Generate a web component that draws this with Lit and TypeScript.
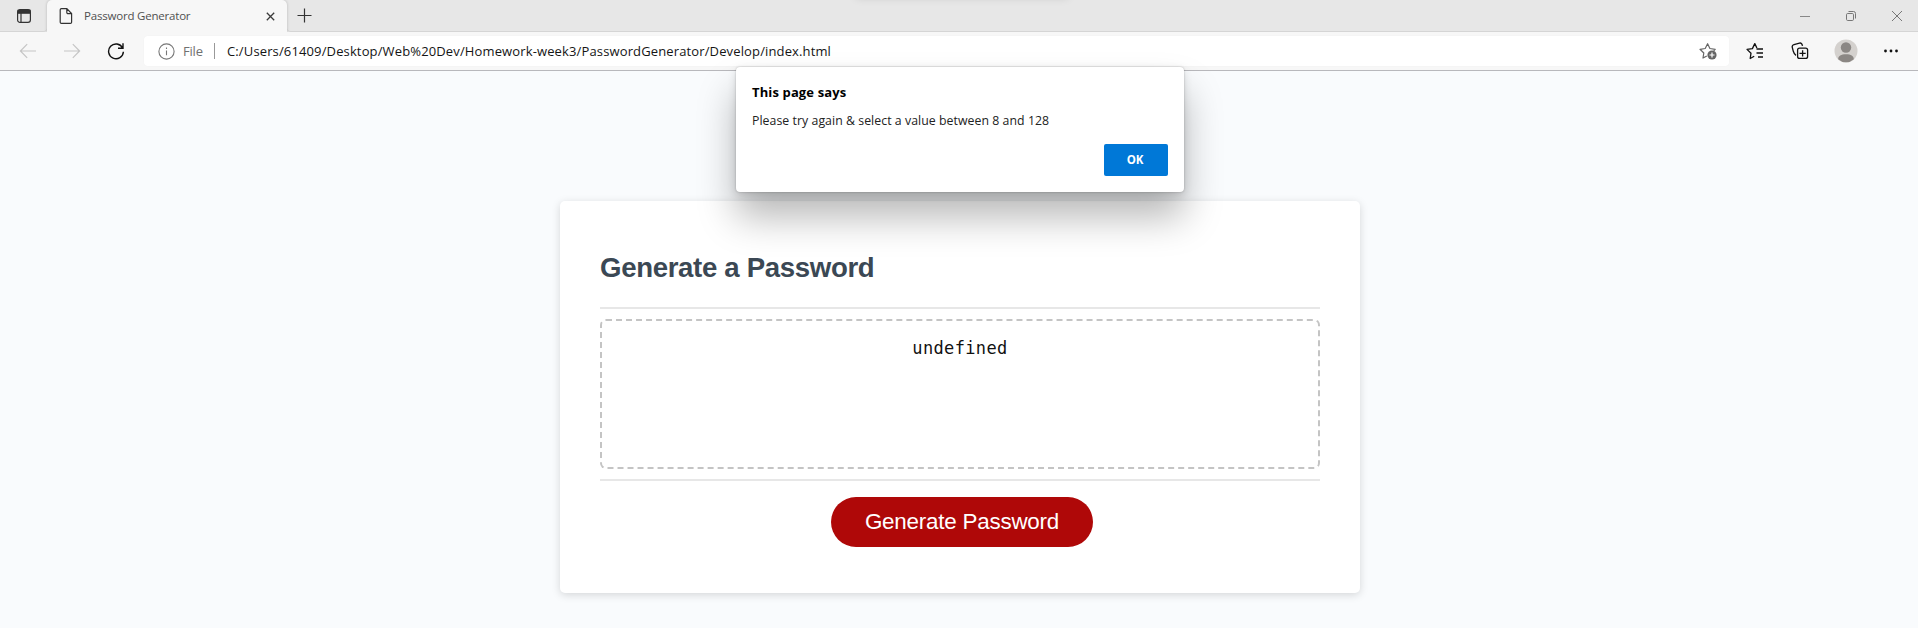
import { LitElement, html, css } from "lit";
import { customElement } from "lit/decorators.js";

@customElement("browser-tabs")
class BrowserTabs extends LitElement {
  static styles = css`
    :host { display: flex; height: 32px; box-sizing: border-box; background: #e7e7e7; font-family: "Open Sans", sans-serif; }
    .menu { width: 47px; display: flex; align-items: center; box-sizing: border-box; padding-left: 16px; border-bottom: 1px solid #d5d5d5; border-bottom-right-radius: 4px; }
    .tab { width: 240px; box-sizing: border-box; display: flex; align-items: center; background: #f7f7f7; border-radius: 5px 5px 0 0; box-shadow: 0 0 3px #00000038; clip-path: inset(0 -4px 0 -4px); padding-left: 12px; }
    .title { margin-left: 11px; width: 182px; font-size: 11.5px; line-height: 16px; color: #505050; white-space: nowrap; letter-spacing: -0.2px; }
    .rest { flex: 1; display: flex; align-items: center; box-sizing: border-box; border-bottom: 1px solid #d5d5d5; border-bottom-left-radius: 4px; padding-left: 10px; }
    .window { margin-left: auto; display: flex; align-items: center; gap: 36px; padding-right: 16px; }
    .glow { position: absolute; left: 856px; top: -10px; width: 212px; height: 8px; box-shadow: 0 0 8px #00000020; }
    svg { display: block; flex: none; }
  `;
  render() {
    return html`
      <div class="menu">
        <svg width="16" height="16" viewBox="0 0 16 16" fill="none" stroke="#333" stroke-width="1.2">
          <rect x="1.6" y="1.6" width="12.8" height="12.8" rx="2.4" />
          <path d="M2 2.4h12v2.8H2z" fill="#333" /><path d="M5 5v9.4" />
        </svg>
      </div>
      <div class="tab">
        <svg width="14" height="18" viewBox="0 0 14 18" fill="none" stroke="#333" stroke-width="1.2">
          <path d="M2.4 1.6h5.4l4.8 4.9v8.7a1.2 1.2 0 0 1-1.2 1.2h-9a1.2 1.2 0 0 1-1.2-1.2V2.8a1.2 1.2 0 0 1 1.2-1.2zM7.8 1.8v3.6a1.2 1.2 0 0 0 1.2 1.2h3.6" />
        </svg>
        <span class="title">Password Generator</span>
        <svg width="9" height="10" viewBox="0 0 9 10" stroke="#3b3b3b" stroke-width="1.3"><path d="M.8 1.8l7.4 7.4M8.2 1.8L.8 9.2" /></svg>
      </div>
      <div class="rest">
        <svg width="15" height="15" viewBox="0 0 15 15" stroke="#333" stroke-width="1.2"><path d="M.5 7.5h14M7.5.5v14" /></svg>
        <div class="window">
          <svg width="10" height="12" viewBox="0 0 10 12" stroke="#888"><path d="M0 6.5h10" /></svg>
          <svg width="10" height="12" viewBox="0 0 10 12" stroke="#777" fill="none">
            <rect x=".5" y="3.5" width="7" height="7" rx="1.2" /><path d="M2.5 1.5h5a2 2 0 0 1 2 2v5" />
          </svg>
          <svg width="10" height="10" viewBox="0 0 10 10" stroke="#777"><path d="M0 0l10 10M10 0L0 10" /></svg>
        </div>
      </div>
      <div class="glow"></div>
    `;
  }
}

@customElement("browser-toolbar")
class BrowserToolbar extends LitElement {
  static styles = css`
    :host { display: flex; align-items: center; height: 39px; box-sizing: border-box; background: #f7f7f7; border-bottom: 1px solid #b8b8bc; padding-left: 19px; font-family: "Open Sans", sans-serif; }
    svg { display: block; flex: none; }
    .nav { width: 125px; display: flex; align-items: center; gap: 26px; }
    .address { width: 1585px; height: 30px; box-sizing: border-box; padding: 0 12px 0 14px; display: flex; align-items: center; background: #fff; border-radius: 4px; font-size: 13px; line-height: 20px; white-space: nowrap; box-shadow: 0 0 2px #00000008; }
    .scheme { margin-left: 8px; width: 31px; color: #707070; letter-spacing: -0.2px; }
    .bar { width: 1px; height: 16px; background: #999; margin-right: 12px; }
    .url { color: #151515; letter-spacing: 0.135px; }
    .favourite { margin-left: auto; }
    .actions { display: grid; grid-template-columns: repeat(4, 45.5px); justify-items: center; align-items: center; padding-left: 3px; }
  `;
  render() {
    return html`
      <div class="nav">
        <svg width="18" height="16" viewBox="0 0 18 16" fill="none" stroke="#c5c5c5" stroke-width="1.2"><path d="M17 8H1.5M8.2 1.2L1.4 8l6.8 6.8" /></svg>
        <svg width="18" height="16" viewBox="0 0 18 16" fill="none" stroke="#c5c5c5" stroke-width="1.2"><path d="M1 8h15.6M9.8 1.2L16.6 8l-6.8 6.8" /></svg>
        <svg width="18" height="18" viewBox="0 0 18 18" fill="none" stroke="#111" stroke-width="1.4"><path d="M15.6 6A7.4 7.4 0 1 0 16.4 9.8M16 1.2v5h-5" /></svg>
      </div>
      <div class="address">
        <svg width="17" height="17" viewBox="0 0 17 17" fill="none" stroke="#777" stroke-width="1.1"><circle cx="8.5" cy="8.5" r="7.6" /><path d="M8.5 7.5v4.7M8.5 4.6v1.4" /></svg>
        <span class="scheme">File</span>
        <span class="bar"></span>
        <span class="url">C:/Users/61409/Desktop/Web%20Dev/Homework-week3/PasswordGenerator/Develop/index.html</span>
        <svg class="favourite" width="18" height="18" viewBox="0 0 18 18" fill="none" stroke="#666" stroke-width="1.2" stroke-linejoin="round">
          <path d="M7.8 14L4 16l.8-5L1 7.3l5.2-.8L8.6 1.7l2.3 4.8 5.3.8-1.5 1.4" />
          <circle cx="13" cy="13" r="4.6" fill="#666" stroke="none" /><path d="M10.5 13h5M13 10.5v5" stroke="#fff" />
        </svg>
      </div>
      <div class="actions">
        <svg width="18" height="18" viewBox="0 0 18 18" fill="none" stroke="#111" stroke-width="1.3" stroke-linejoin="round">
          <path d="M8.2 14.2L4.2 16.5 5 11.2 1 7.4l5.4-.8L8.8 1.6l2.1 4.4M10.5 7h6.5M10.5 11h6.5M12 15h5" />
        </svg>
        <svg width="18" height="18" viewBox="0 0 18 18" fill="none" stroke="#111" stroke-width="1.3">
          <rect x="6.6" y="6.1" width="10" height="10.3" rx="2" /><path d="M11.6 8.2v6.2M8.5 11.3h6.2M5 13.4C3.400 12.600 2.800 11 2.300 9.300L1.300 5.500C.9 4 1.500 3 3 2.500L8.500 1.100c1.500-.4 2.500.4 3 2.700" />
        </svg>
        <svg width="24" height="24" viewBox="0 0 24 24"><circle cx="12" cy="12" r="11.5" fill="#d4d1ce" /><circle cx="12" cy="8.5" r="5.2" fill="#8b8784" /><path d="M4.2 20.2C4.2 17 7 15.2 12 15.2s7.8 1.8 7.8 5a11.5 11.5 0 0 1-15.6 0z" fill="#8b8784" /></svg>
        <svg width="24" height="18" viewBox="0 0 24 18" fill="#111"><circle cx="6.5" cy="9" r="1.4" /><circle cx="12" cy="9" r="1.4" /><circle cx="17.5" cy="9" r="1.4" /></svg>
      </div>
    `;
  }
}

@customElement("page-alert")
class PageAlert extends LitElement {
  static styles = css`
    :host { position: absolute; top: 67px; left: 736px; width: 448px; height: 125px; box-sizing: border-box; padding: 15px 16px 16px; display: flex; flex-direction: column; background: #fff; border-radius: 4px; box-shadow: 0 0 2px #00000040, 0 3px 8px #00000020, 0 25px 38px #00000048; font-family: "Open Sans", sans-serif; font-size: 12.3px; color: #222; white-space: nowrap; }
    .title { font-weight: 700; font-size: 13px; line-height: 20px; color: #000; letter-spacing: 0.13px; }
    .message { margin-top: 10px; line-height: 18px; letter-spacing: 0.05px; }
    .ok { margin: auto 0 0 auto; width: 64px; height: 32px; padding: 0 2px 2px 0; border: 0; border-radius: 2px; background: #0078d7; color: #fff; font: 700 11.5px "Open Sans", sans-serif; letter-spacing: -0.2px; }
  `;
  render() {
    return html`<div class="title">This page says</div>
      <div class="message">Please try again &amp; select a value between 8 and 128</div>
      <button class="ok">OK</button>`;
  }
}

@customElement("password-card")
class PasswordCard extends LitElement {
  static styles = css`
    :host { display: flex; flex-direction: column; width: 800px; height: 392px; box-sizing: border-box; padding: 0 40px; background: #fff; border-radius: 5px; box-shadow: 0 2px 8px #00000026; font-family: "Liberation Sans", Arial, sans-serif; }
    h2 { margin: 0; height: 106px; padding-top: 51px; box-sizing: border-box; font-size: 27.6px; line-height: 32px; letter-spacing: -0.33px; color: #3b4854; }
    .body { border: solid #e7e7e7; border-width: 2px 0; height: 174px; box-sizing: border-box; padding: 10px 0; }
    .output { height: 150px; box-sizing: border-box; border: 2px dashed #c4c4c4; border-radius: 6px; text-align: center; padding-top: 16px; font: 17px/22px "DejaVu Sans Mono", monospace; letter-spacing: 0.35px; color: #111; }
    .generate { margin: 16px 0 0 231px; width: 262px; height: 50px; padding: 0 0 1px; border: 0; border-radius: 25px; background: #af0808; color: #fff; font: 22.4px "Liberation Sans", Arial, sans-serif; letter-spacing: -0.22px; }
  `;
  render() {
    return html`<h2>Generate a Password</h2>
      <div class="body"><div class="output">undefined</div></div>
      <button class="generate">Generate Password</button>`;
  }
}

@customElement("app-root")
class AppRoot extends LitElement {
  static styles = css`
    :host { display: block; position: relative; height: 628px; overflow: hidden; background: #f9fbfd; }
    .page { display: flex; justify-content: center; padding-top: 130px; }
    .page password-card { margin-left: 2px; }
  `;
  render() {
    return html`<browser-tabs></browser-tabs><browser-toolbar></browser-toolbar>
      <main class="page"><password-card></password-card></main>
      <page-alert></page-alert>`;
  }
}
